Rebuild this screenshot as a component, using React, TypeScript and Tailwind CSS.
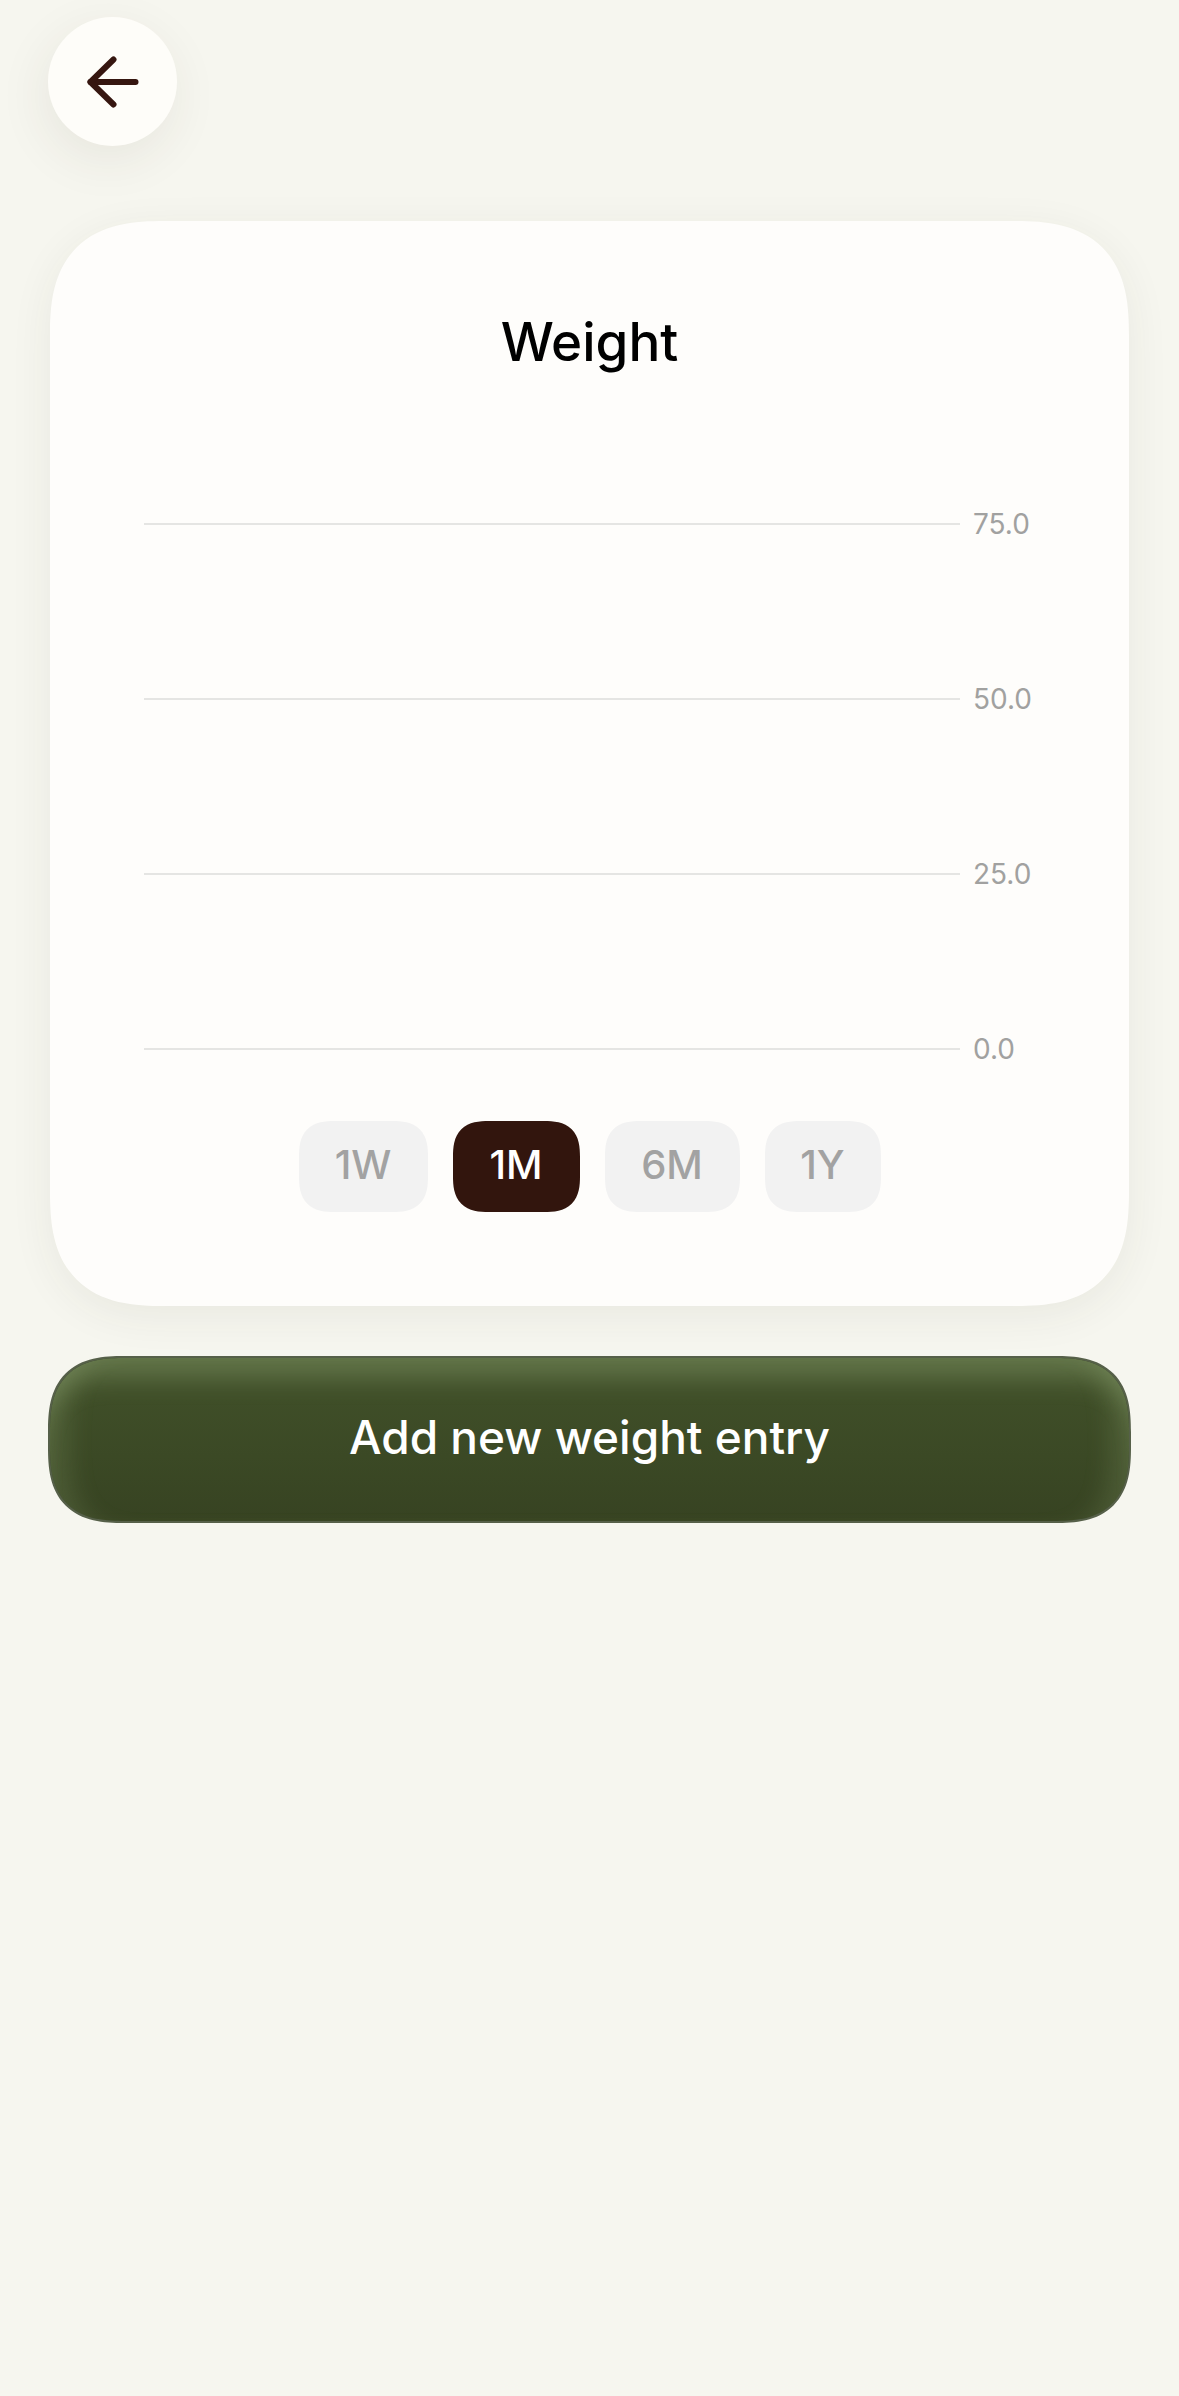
const ticks = ["75.0", "50.0", "25.0", "0.0"];
const ranges = [
  { label: "1W", width: "w-[129px]" },
  { label: "1M", width: "w-[127px]", active: true },
  { label: "6M", width: "w-[135px]" },
  { label: "1Y", width: "w-[116px]" },
];

function BackArrow() {
  return (
    <svg width="52" height="52" viewBox="0 0 52 52" fill="none" stroke="#361610" strokeWidth="6" strokeLinecap="round" strokeLinejoin="round">
      <path d="M3.5 26H48.5" />
      <path d="M26.5 3.5L3.5 26L26.5 48.5" />
    </svg>
  );
}

export default function App() {
  return (
    <div className="min-h-[2396px] bg-[#f6f6ef] px-[48px] pt-[17px] font-['Inter',sans-serif]">
      <button className="flex h-[129px] w-[129px] items-center justify-center rounded-full bg-[#fefdf9] shadow-[-4px_14px_50px_rgba(60,50,40,0.08)]">
        <BackArrow />
      </button>

      <section className="mx-[2px] mt-[75px] flex h-[1085px] flex-col rounded-[115px] bg-[#fefdfb] shadow-[0_10px_44px_rgba(60,50,40,0.07)] [corner-shape:superellipse(1.4)]">
        <h1 className="mt-[91px] text-center text-[53px] leading-[60px] font-medium text-black">
          Weight
        </h1>

        <div className="mt-[151px] flex flex-col gap-[174px] pl-[94px]">
          {ticks.map((tick) => (
            <div key={tick} className="flex h-[1px] items-center gap-[13px]">
              <div className="h-[2px] w-[816px] bg-[#e5e5e3]" />
              <span className="text-[28px] text-[#a1a1a0]">{tick}</span>
            </div>
          ))}
        </div>

        <div className="mt-[72px] flex justify-center gap-[25px]">
          {ranges.map((range) => (
            <div
              key={range.label}
              className={`flex h-[91px] items-center justify-center rounded-[36px] pb-[3px] text-[40px] font-medium [corner-shape:superellipse(1.4)] ${range.width} ${
                range.active ? "bg-[#32150d] text-white" : "bg-[#f2f2f2] text-[#a2a2a2]"
              }`}
            >
              {range.label}
            </div>
          ))}
        </div>
      </section>

      <button className="mt-[50px] flex h-[167px] w-full items-center justify-center rounded-[76px] border-2 border-[#566049] bg-gradient-to-b from-[#3f4e28] from-25% via-[#3b4925] via-60% to-[#374322] pb-[4px] text-[46px] font-medium text-white shadow-[inset_0_34px_26px_-14px_rgba(180,205,150,0.3),inset_34px_0_26px_-16px_rgba(180,205,150,0.16),inset_-34px_0_26px_-16px_rgba(180,205,150,0.16)] [corner-shape:superellipse(1.4)]">
        Add new weight entry
      </button>
    </div>
  );
}
